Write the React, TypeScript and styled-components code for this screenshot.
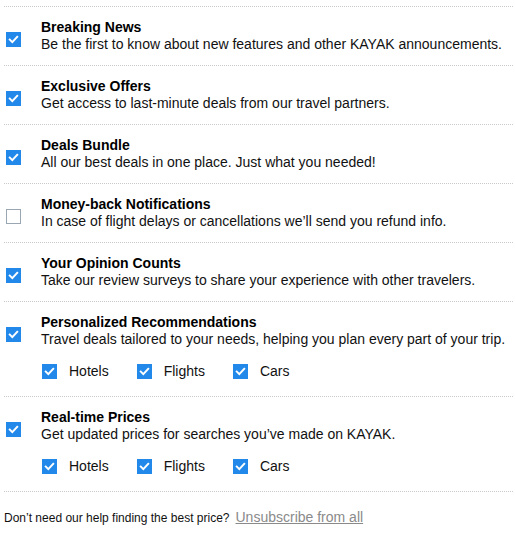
import React, { useState } from "react";
import styled, { createGlobalStyle } from "styled-components";

const Global = createGlobalStyle`
  html, body { margin: 0; padding: 0; background: #fff; }
  body { font-family: "Liberation Sans", Arial, sans-serif; color: #000; }
`;

const Page = styled.div`
  padding: 6px 2px 0 4px;
`;

const Row = styled.div`
  display: flex;
  align-items: flex-start;
  border-top: 1px dotted #c9c9c9;
  padding: 12px 0 12px 2px;
`;

const Box = styled.button<{ $on: boolean; $top?: number }>`
  flex: none;
  width: 15px;
  height: 15px;
  padding: 0;
  margin: ${(p) => p.$top ?? 0}px 0 0 0;
  box-sizing: border-box;
  border: 1px solid ${(p) => (p.$on ? "#2289ea" : "#9aa6b2")};
  background: ${(p) => (p.$on ? "#2289ea" : "#fff")};
  display: flex;
  align-items: center;
  justify-content: center;
  cursor: pointer;
`;

const MainBox = styled(Box)`
  margin-right: 20px;
`;

const Content = styled.div`
  flex: 1;
  min-width: 0;
`;

const Title = styled.div`
  font-size: 14px;
  line-height: 17px;
  font-weight: bold;
  color: #000;
`;

const Desc = styled.div`
  font-size: 14px;
  line-height: 17px;
  color: #111;
`;

const Options = styled.div`
  display: flex;
  gap: 28px;
  margin: 15px 0 4px 1px;
`;

const Option = styled.label`
  display: flex;
  align-items: center;
  gap: 12px;
  font-size: 14px;
  line-height: 17px;
  color: #111;
  cursor: pointer;
`;

const Footer = styled.div`
  border-top: 1px dotted #c9c9c9;
  padding-top: 17px;
  font-size: 12px;
  line-height: 17px;
  color: #111;
`;

const Unsub = styled.a`
  font-size: 14px;
  color: #8a8a8a;
  text-decoration: underline;
  margin-left: 6px;
  cursor: pointer;
`;

const Check = ({ on }: { on: boolean }) =>
  on ? (
    <svg width="11" height="11" viewBox="0 0 11 11">
      <path d="M1.8 5.6 L4.3 8.1 L9.2 2.8" fill="none" stroke="#fff" strokeWidth="2" strokeLinecap="square" />
    </svg>
  ) : null;

type Item = { title: string; desc: string; on: boolean; subs?: boolean };

const items: Item[] = [
  { title: "Breaking News", desc: "Be the first to know about new features and other KAYAK announcements.", on: true },
  { title: "Exclusive Offers", desc: "Get access to last-minute deals from our travel partners.", on: true },
  { title: "Deals Bundle", desc: "All our best deals in one place. Just what you needed!", on: true },
  { title: "Money-back Notifications", desc: "In case of flight delays or cancellations we\u2019ll send you refund info.", on: false },
  { title: "Your Opinion Counts", desc: "Take our review surveys to share your experience with other travelers.", on: true },
  { title: "Personalized Recommendations", desc: "Travel deals tailored to your needs, helping you plan every part of your trip.", on: true, subs: true },
  { title: "Real-time Prices", desc: "Get updated prices for searches you\u2019ve made on KAYAK.", on: true, subs: true },
];

const subNames = ["Hotels", "Flights", "Cars"];

export default function App() {
  const [state, setState] = useState(items.map((i) => i.on));
  const [subs, setSubs] = useState(items.map(() => [true, true, true]));

  return (
    <Page>
      <Global />
      {items.map((it, i) => (
        <Row key={it.title}>
          <MainBox
            $on={state[i]}
            $top={13}
            onClick={() => setState(state.map((v, j) => (j === i ? !v : v)))}
          >
            <Check on={state[i]} />
          </MainBox>
          <Content>
            <Title>{it.title}</Title>
            <Desc>{it.desc}</Desc>
            {it.subs && (
              <Options>
                {subNames.map((n, k) => (
                  <Option key={n}>
                    <Box
                      $on={subs[i][k]}
                      onClick={() =>
                        setSubs(subs.map((row, j) => (j === i ? row.map((v, m) => (m === k ? !v : v)) : row)))
                      }
                    >
                      <Check on={subs[i][k]} />
                    </Box>
                    {n}
                  </Option>
                ))}
              </Options>
            )}
          </Content>
        </Row>
      ))}
      <Footer>
        Don{"\u2019"}t need our help finding the best price?
        <Unsub>Unsubscribe from all</Unsub>
      </Footer>
    </Page>
  );
}
